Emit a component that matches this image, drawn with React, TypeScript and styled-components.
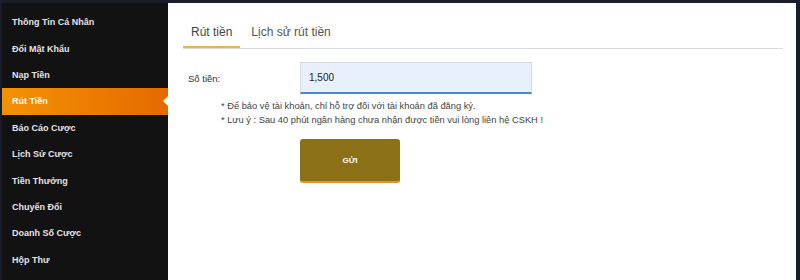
import { useState } from 'react'
import styled, { createGlobalStyle } from 'styled-components'

const GlobalStyle = createGlobalStyle`
  html, body {
    margin: 0;
    padding: 0;
    background: #1b1c29;
    font-family: 'Liberation Sans', Arial, sans-serif;
  }
  * {
    box-sizing: border-box;
  }
`

const Page = styled.div`
  display: flex;
  height: 280px;
  padding: 3px 4px 0 2px;
  background: #1b1c29;
  overflow: hidden;
`

const Sidebar = styled.ul`
  width: 166px;
  flex-shrink: 0;
  margin: 0;
  padding: 6px 0 0;
  list-style: none;
  background: #121212;
`

const MenuItem = styled.li<{ $active?: boolean }>`
  position: relative;
  display: flex;
  align-items: center;
  height: 26.4px;
  padding-left: 10px;
  font-size: 9px;
  font-weight: bold;
  color: ${(p) => (p.$active ? '#fff' : '#e4e4e4')};
  background: ${(p) => (p.$active ? 'linear-gradient(90deg, #f39200 0%, #e46a00 100%)' : 'transparent')};
  cursor: pointer;

  &::after {
    content: '';
    display: ${(p) => (p.$active ? 'block' : 'none')};
    position: absolute;
    right: 0;
    top: 50%;
    margin-top: -5px;
    border-top: 5px solid transparent;
    border-bottom: 5px solid transparent;
    border-right: 5px solid #fff;
  }
`

const Panel = styled.div`
  flex: 1;
  background: #fff;
  padding: 15px 13px 0 15px;
`

const TabBar = styled.div`
  display: flex;
  border-bottom: 1px solid #dcdcdc;
`

const Tab = styled.div<{ $active?: boolean }>`
  height: 30px;
  padding: 0 8px;
  margin-right: 3px;
  display: flex;
  align-items: center;
  font-size: 12px;
  color: ${(p) => (p.$active ? '#444' : '#555')};
  border-bottom: 2px solid ${(p) => (p.$active ? '#f0b440' : 'transparent')};
  cursor: pointer;
`

const Form = styled.div`
  padding-top: 13px;
`

const Row = styled.div`
  display: flex;
  align-items: center;
`

const Label = styled.label`
  width: 117px;
  padding-left: 5px;
  font-size: 9.5px;
  color: #333;
`

const Input = styled.input`
  width: 232px;
  height: 32px;
  padding: 0 8px;
  border: 1px solid #d6dbe6;
  border-bottom: 2px solid #4a86d8;
  background: #e8f0fe;
  font-family: inherit;
  font-size: 10px;
  color: #222;
  outline: none;
`

const Notes = styled.div`
  padding: 5px 0 0 38px;
  font-size: 9.3px;
  line-height: 14px;
  color: #444;
`

const SubmitButton = styled.button`
  margin: 12px 0 0 117px;
  width: 100px;
  height: 44px;
  border: none;
  border-bottom: 2px solid #f0921a;
  border-radius: 3px;
  background: #8c7017;
  color: #fff;
  font-family: inherit;
  font-size: 8px;
  font-weight: bold;
  cursor: pointer;
`

const menu = [
  'Thông Tin Cá Nhân',
  'Đổi Mật Khẩu',
  'Nạp Tiền',
  'Rút Tiền',
  'Báo Cáo Cược',
  'Lịch Sử Cược',
  'Tiền Thưởng',
  'Chuyển Đổi',
  'Doanh Số Cược',
  'Hộp Thư',
]

export default () => {
  const [active, setActive] = useState(3)
  const [tab, setTab] = useState(0)
  const [amount, setAmount] = useState('1,500')

  return (
    <>
      <GlobalStyle />
      <Page>
        <Sidebar>
          {menu.map((item, index) => (
            <MenuItem key={item} $active={index === active} onClick={() => setActive(index)}>
              {item}
            </MenuItem>
          ))}
        </Sidebar>
        <Panel>
          <TabBar>
            {['Rút tiền', 'Lịch sử rút tiền'].map((t, i) => (
              <Tab key={t} $active={i === tab} onClick={() => setTab(i)}>
                {t}
              </Tab>
            ))}
          </TabBar>
          <Form>
            <Row>
              <Label>Số tiền:</Label>
              <Input value={amount} onChange={(e) => setAmount(e.target.value)} />
            </Row>
            <Notes>
              <div>* Để bảo vệ tài khoản, chỉ hỗ trợ đối với tài khoản đã đăng ký.</div>
              <div>* Lưu ý : Sau 40 phút ngân hàng chưa nhận được tiền vui lòng liên hệ CSKH !</div>
            </Notes>
            <SubmitButton>GỬI</SubmitButton>
          </Form>
        </Panel>
      </Page>
    </>
  )
}
